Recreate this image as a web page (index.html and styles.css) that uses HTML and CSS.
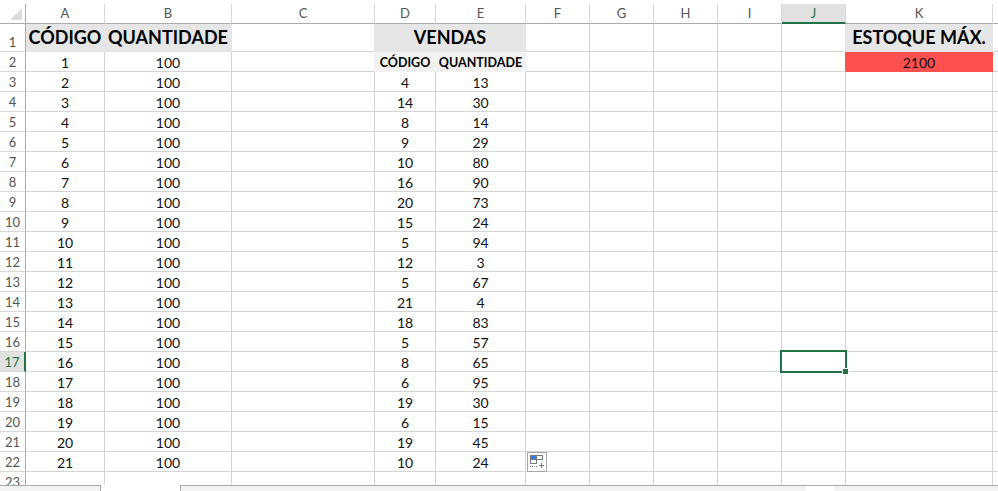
FILE: index.html
```html
<!DOCTYPE html>
<html lang="pt">
<head>
<meta charset="utf-8">
<title>Planilha</title>
<link rel="stylesheet" href="styles.css">
</head>
<body>
<main class="sheet">
<table class="grid">
<colgroup><col class="c-hd"><col class="c-a"><col class="c-b"><col class="c-c"><col class="c-d"><col class="c-e"><col class="c-n"><col class="c-n"><col class="c-n"><col class="c-n"><col class="c-n"><col class="c-k"><col></colgroup>
<thead>
<tr><th class="corner"><span class="tri"></span></th><th>A</th><th>B</th><th>C</th><th>D</th><th>E</th><th>F</th><th>G</th><th>H</th><th>I</th><th class="sel-col">J</th><th>K</th><th></th></tr>
</thead>
<tbody>
<tr class="r1"><th>1</th><td class="title">CÓDIGO</td><td class="title">QUANTIDADE</td><td class="edge-t"></td><td class="title" colspan="2">VENDAS</td><td></td><td></td><td></td><td></td><td class="edge-t"></td><td class="title">ESTOQUE MÁX.</td><td></td></tr>
<tr><th>2</th><td>1</td><td>100</td><td class="edge-s"></td><td class="sub">CÓDIGO</td><td class="sub">QUANTIDADE</td><td></td><td></td><td></td><td></td><td class="edge-r"></td><td class="max">2100</td><td></td></tr>
<tr><th>3</th><td>2</td><td>100</td><td></td><td>4</td><td>13</td><td></td><td></td><td></td><td></td><td></td><td></td><td></td></tr>
<tr><th>4</th><td>3</td><td>100</td><td></td><td>14</td><td>30</td><td></td><td></td><td></td><td></td><td></td><td></td><td></td></tr>
<tr><th>5</th><td>4</td><td>100</td><td></td><td>8</td><td>14</td><td></td><td></td><td></td><td></td><td></td><td></td><td></td></tr>
<tr><th>6</th><td>5</td><td>100</td><td></td><td>9</td><td>29</td><td></td><td></td><td></td><td></td><td></td><td></td><td></td></tr>
<tr><th>7</th><td>6</td><td>100</td><td></td><td>10</td><td>80</td><td></td><td></td><td></td><td></td><td></td><td></td><td></td></tr>
<tr><th>8</th><td>7</td><td>100</td><td></td><td>16</td><td>90</td><td></td><td></td><td></td><td></td><td></td><td></td><td></td></tr>
<tr><th>9</th><td>8</td><td>100</td><td></td><td>20</td><td>73</td><td></td><td></td><td></td><td></td><td></td><td></td><td></td></tr>
<tr><th>10</th><td>9</td><td>100</td><td></td><td>15</td><td>24</td><td></td><td></td><td></td><td></td><td></td><td></td><td></td></tr>
<tr><th>11</th><td>10</td><td>100</td><td></td><td>5</td><td>94</td><td></td><td></td><td></td><td></td><td></td><td></td><td></td></tr>
<tr><th>12</th><td>11</td><td>100</td><td></td><td>12</td><td>3</td><td></td><td></td><td></td><td></td><td></td><td></td><td></td></tr>
<tr><th>13</th><td>12</td><td>100</td><td></td><td>5</td><td>67</td><td></td><td></td><td></td><td></td><td></td><td></td><td></td></tr>
<tr><th>14</th><td>13</td><td>100</td><td></td><td>21</td><td>4</td><td></td><td></td><td></td><td></td><td></td><td></td><td></td></tr>
<tr><th>15</th><td>14</td><td>100</td><td></td><td>18</td><td>83</td><td></td><td></td><td></td><td></td><td></td><td></td><td></td></tr>
<tr><th>16</th><td>15</td><td>100</td><td></td><td>5</td><td>57</td><td></td><td></td><td></td><td></td><td></td><td></td><td></td></tr>
<tr><th class="sel-row">17</th><td>16</td><td>100</td><td></td><td>8</td><td>65</td><td></td><td></td><td></td><td></td><td></td><td></td><td></td></tr>
<tr><th>18</th><td>17</td><td>100</td><td></td><td>6</td><td>95</td><td></td><td></td><td></td><td></td><td></td><td></td><td></td></tr>
<tr><th>19</th><td>18</td><td>100</td><td></td><td>19</td><td>30</td><td></td><td></td><td></td><td></td><td></td><td></td><td></td></tr>
<tr><th>20</th><td>19</td><td>100</td><td></td><td>6</td><td>15</td><td></td><td></td><td></td><td></td><td></td><td></td><td></td></tr>
<tr><th>21</th><td>20</td><td>100</td><td></td><td>19</td><td>45</td><td></td><td></td><td></td><td></td><td></td><td></td><td></td></tr>
<tr><th>22</th><td>21</td><td>100</td><td></td><td>10</td><td>24</td><td></td><td></td><td></td><td></td><td></td><td></td><td></td></tr>
<tr><th>23</th><td></td><td></td><td></td><td></td><td></td><td></td><td></td><td></td><td></td><td></td><td></td><td></td></tr>
</tbody>
</table>
<div class="cursor"><span class="handle"></span></div>
<div class="paste">
<svg width="20" height="20" viewBox="0 0 20 20" aria-hidden="true">
<rect x="3.5" y="3.5" width="6" height="4" fill="#2f7bf0" stroke="#7a7a7a"/>
<rect x="9.5" y="3.5" width="6" height="4" fill="#fff" stroke="#7a7a7a"/>
<rect x="3.5" y="7.5" width="6" height="4" fill="#fff" stroke="#7a7a7a"/>
<path d="M3 14.5h1M5 14.5h1M7 14.5h1M9 14.5h1" stroke="#7a7a7a"/>
<path d="M12 13.5h5M14.5 11v5" stroke="#7a7a7a"/>
</svg>
</div>
</main>
<footer class="tabs">
<div class="tab-rest t1"></div>
<div class="tab-active"></div>
<div class="tab-rest t2"></div>
<div class="tab-active t3"></div>
<div class="tab-rest t4"></div>
</footer>
</body>
</html>
```
FILE: styles.css
```css
html, body {
  margin: 0;
  height: 100%;
  overflow: hidden;
  background: #fff;
}
body {
  display: flex;
  flex-direction: column;
  height: 491px;
  padding-top: 4px;
  box-sizing: border-box;
  font-family: Lato, "Open Sans", sans-serif;
  font-size: 14px;
  color: #111;
}
.sheet {
  position: relative;
  height: 481px;
  overflow: hidden;
  flex: none;
}
.grid {
  table-layout: fixed;
  width: 998px;
  border-collapse: separate;
  border-spacing: 0;
}
.c-hd { width: 26px; }
.c-a { width: 79px; }
.c-b { width: 127px; }
.c-c { width: 143px; }
.c-d { width: 61px; }
.c-e { width: 90px; }
.c-n { width: 64px; }
.c-k { width: 147px; }
thead th {
  padding: 0;
  box-sizing: border-box;
  height: 20px;
  font-weight: 400;
  font-size: 13px;
  line-height: 19px;
  color: #555;
  background: #fff;
  border-right: 1px solid #d8d8d8;
  border-bottom: 1px solid #ababab;
}
thead th:last-child { border-right: 0; }
.corner {
  position: relative;
  border-right-color: #ababab;
}
.tri {
  position: absolute;
  right: 3px;
  bottom: 3px;
  width: 0;
  height: 0;
  border-style: solid;
  border-width: 0 0 12px 12px;
  border-color: transparent transparent #dcdcdc transparent;
}
thead .sel-col {
  background: #e1e1e1;
  color: #217346;
  border-bottom: 2px solid #217346;
  line-height: 18px;
}
tbody th {
  height: 20px;
  padding: 0;
  box-sizing: border-box;
  font-weight: 400;
  font-size: 13px;
  line-height: 17px;
  color: #555;
  vertical-align: bottom;
  background: #fff;
  border-right: 1px solid #ababab;
  border-bottom: 1px solid #d8d8d8;
}
tbody .sel-row {
  background: #e1e1e1;
  color: #217346;
  border-right: 2px solid #217346;
}
td {
  height: 20px;
  padding: 0;
  box-sizing: border-box;
  text-align: center;
  vertical-align: bottom;
  line-height: 17px;
  white-space: nowrap;
  overflow: hidden;
  border-right: 1px solid #d4d4d4;
  border-bottom: 1px solid #d4d4d4;
}
td:last-child { border-right: 0; }
.r1 th, .r1 td { height: 28px; }
td.title {
  font-size: 18px;
  font-weight: 700;
  line-height: 27px;
  color: #000;
  background: #e7e6e6;
  border-color: #e7e6e6;
}
td.sub {
  font-size: 12.5px;
  font-weight: 700;
  color: #000;
  background: #f2f2f2;
  border-color: #f2f2f2;
}
td.max {
  background: #ff5050;
  border-color: #ff5050;
}
.edge-t { border-right-color: #e7e6e6; }
.edge-s { border-right-color: #f2f2f2; }
.edge-r { border-right-color: #ff5050; }
.cursor {
  position: absolute;
  left: 780px;
  top: 346px;
  width: 67px;
  height: 23px;
  box-sizing: border-box;
  border: 2px solid #217346;
}
.handle {
  position: absolute;
  right: -4px;
  bottom: -4px;
  width: 5px;
  height: 5px;
  background: #217346;
  border: 1px solid #fff;
}
.paste {
  position: absolute;
  left: 527px;
  top: 448px;
  width: 20px;
  height: 20px;
  box-sizing: border-box;
  background: #fff;
  border: 1px solid #a6a6a6;
  display: flex;
}
.paste svg { margin: -1px; }
.tabs {
  flex: none;
  height: 6px;
  display: flex;
  background: #f3f3f3;
}
.tab-rest {
  box-sizing: border-box;
  border-top: 1px solid #ababab;
  background: #f3f3f3;
}
.t1 { width: 101px; border-right: 1px solid #ababab; }
.tab-active {
  width: 79px;
  background: #fff;
}
.t2 { width: 626px; border-left: 1px solid #ababab; }
.t3 { width: 28px; border-top: 1px solid #ababab; }
.t4 { flex: 1; }
```
